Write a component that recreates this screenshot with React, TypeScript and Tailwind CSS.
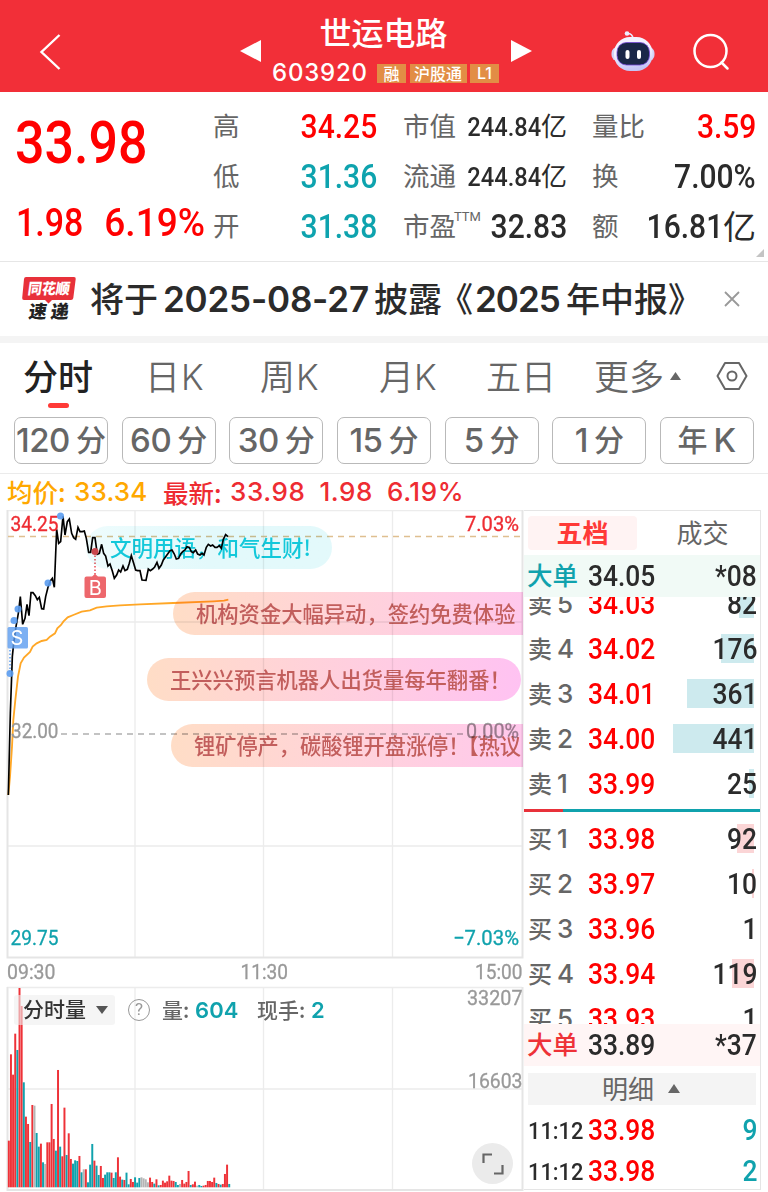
import clsx from 'clsx'

const UP = '#ee3238'
const DOWN = '#10a2ad'
const FLAT = '#b5b5b5'

const quoteColumns = [
  {
    className: 'w-[164px]',
    rows: [
      { label: '高', value: '34.25', color: 'text-[#ff0000]' },
      { label: '低', value: '31.36', color: 'text-[#0ea3ae]' },
      { label: '开', value: '31.38', color: 'text-[#0ea3ae]' },
    ],
  },
  {
    className: 'ml-[26px] w-[164px]',
    rows: [
      { label: '市值', value: '244.84', unit: '亿', small: true },
      { label: '流通', value: '244.84', unit: '亿', small: true },
      { label: '市盈', value: '32.83', ttm: true },
    ],
  },
  {
    className: 'ml-[25px] w-[164px]',
    rows: [
      { label: '量比', value: '3.59', color: 'text-[#ff0000]' },
      { label: '换', value: '7.00%' },
      { label: '额', value: '16.81', unit: '亿' },
    ],
  },
]

const periods = [
  ['120', '分'],
  ['60', '分'],
  ['30', '分'],
  ['15', '分'],
  ['5', '分'],
  ['1', '分'],
  ['年', 'K'],
]

const asks = [
  { label: '卖', level: 5, price: '34.03', volume: 82, depth: 15 },
  { label: '卖', level: 4, price: '34.02', volume: 176, depth: 33 },
  { label: '卖', level: 3, price: '34.01', volume: 361, depth: 67 },
  { label: '卖', level: 2, price: '34.00', volume: 441, depth: 81 },
  { label: '卖', level: 1, price: '33.99', volume: 25, depth: 5 },
]

const bids = [
  { label: '买', level: 1, price: '33.98', volume: 92, depth: 17 },
  { label: '买', level: 2, price: '33.97', volume: 10, depth: 2 },
  { label: '买', level: 3, price: '33.96', volume: 1, depth: 0 },
  { label: '买', level: 4, price: '33.94', volume: 119, depth: 22 },
  { label: '买', level: 5, price: '33.93', volume: 1, depth: 0 },
]

// Chart series are kept in thirds of a pixel
const pricePoints =
  '25,885 31,640 37,470 41,430 48,380 55,340 61,290 68,373 75,355 81,313 87,347 93,278 99,278 106,287 112,299 118,292 125,326 131,327 137,290 144,262 151,243 157,235 163,262 170,88 176,130 182,125 189,48 195,105 202,65 208,57 215,100 221,113 227,118 234,82 240,95 247,95 253,93 259,115 266,157 272,157 278,113 285,113 292,163 298,160 305,133 311,160 317,168 324,198 330,192 337,213 343,235 350,225 356,210 362,216 369,198 375,212 382,208 388,190 394,167 401,190 407,210 413,212 420,212 426,240 438,241 445,207 451,212 458,207 464,201 471,187 477,205 484,195 490,180 497,170 503,162 510,152 516,150 523,162 529,177 536,175 542,162 548,155 555,150 561,140 568,142 574,155 580,158 587,150 593,162 600,165 606,160 612,165 619,142 625,133 632,138 638,135 645,142 651,142 658,137 664,145 670,118 677,104 684,110'
const averagePoints =
  '25,885 30,830 36,740 40,660 46,600 54,530 62,490 72,473 90,456 98,440 110,430 125,423 140,420 150,410 165,400 172,385 183,375 190,365 203,352 220,345 245,335 270,331 290,323 320,319 360,316 420,313 520,309 640,304 672,302 685,299'

const volumes =
  'r140 r399 r338 r461 t412 r598 r544 t315 r212 r190 t136 r247 g245 t163 t122 r131 t75 g70 r135 r135 r250 r145 t110 r352 t122 r93 r239 t97 r162 r85 t71 t81 t79 r94 t45 g54 r54 t15 t68 t130 r80 t65 t37 r64 r28 t38 t45 t45 r44 t28 t45 r90 r32 t23 r22 t44 t9 r25 r16 t30 t14 t28 g30 g27 g24 g15 r29 r16 t11 r24 t6 r7 r20 r14 r18 r35 r20 r19 t16 t7 g10 r22 r11 r16 r49 t7 r9 r17 g5 t7 t4 r5 r7 r19 r19 r16 r29 t13 r10 t8 r10 r40 r68 t10'
    .split(' ')
    .map((item) => ({
      color: item[0] === 'r' ? UP : item[0] === 't' ? DOWN : FLAT,
      height: Number(item.slice(1)),
    }))

function Num({
  className,
  children,
}: {
  className?: string
  children: React.ReactNode
}) {
  return (
    <span
      className={clsx(
        "inline-block font-['Roboto'] font-medium whitespace-pre",
        className,
      )}
    >
      {children}
    </span>
  )
}

function Header() {
  return (
    <header className="flex h-[92px] bg-[#f22f38] text-white">
      <div className="flex w-[240px] items-center pt-3 pl-[38px]">
        <svg width="24" height="38" fill="none" stroke="currentColor">
          <path d="M21.5 2 3.5 19l18 17" strokeWidth="2.4" />
        </svg>
      </div>
      <svg
        width="22"
        height="24"
        className="mt-[39px] shrink-0"
        fill="currentColor"
      >
        <path d="M0 12 21 1v22z" />
      </svg>
      <div className="flex w-[249px] shrink-0 flex-col items-center">
        <div className="mt-[14px] -ml-[6px] h-[35px] text-[32px] leading-[35px] font-medium">
          世运电路
        </div>
        <div className="mt-[12px] flex w-full items-center pl-[10px]">
          <div className="w-[105px] font-['Inter'] text-[24px] leading-6 font-medium tracking-[0.8px]">
            603920
          </div>
          <div className="flex gap-[3.5px] text-[16px] leading-[18px] font-medium">
            <div className="h-[19px] w-[29px] bg-[#e28d45] text-center">融</div>
            <div className="h-[19px] w-[57px] bg-[#e28d45] text-center">
              沪股通
            </div>
            <div className="h-[19px] w-[29px] bg-[#e28d45] text-center font-['Inter']">
              L1
            </div>
          </div>
        </div>
      </div>
      <svg
        width="22"
        height="24"
        className="mt-[39px] shrink-0"
        fill="currentColor"
      >
        <path d="M21 12 0 1v22z" />
      </svg>
      <svg width="46" height="44" className="mt-[29px] ml-[77px] shrink-0">
        <defs>
          <linearGradient id="head" x1="0" y1="0" x2="0.2" y2="1">
            <stop offset="0.5" stopColor="#f4f2ff" />
            <stop offset="1" stopColor="#c3c5f6" />
          </linearGradient>
        </defs>
        <path
          d="M17.5 4.5q5 0 5.5 5"
          fill="none"
          stroke="#e9e9ff"
          strokeWidth="1.6"
        />
        <circle cx="17" cy="4.5" r="2.3" fill="#eeeeff" />
        <rect x="1.5" y="18" width="43" height="14" rx="6" fill="#d3d3f6" />
        <rect x="4" y="8" width="38.5" height="34" rx="16" fill="url(#head)" />
        <rect
          x="7"
          y="13.5"
          width="32.5"
          height="22.5"
          rx="9.5"
          fill="#1a2748"
          stroke="#7548d8"
          strokeWidth="0.8"
        />
        <rect x="15.5" y="21" width="4" height="9" rx="2" fill="#fff" />
        <rect x="27" y="21" width="4" height="9" rx="2" fill="#fff" />
      </svg>
      <svg
        width="40"
        height="40"
        className="mt-8 ml-[36px] shrink-0"
        fill="none"
        stroke="currentColor"
        strokeWidth="2.5"
      >
        <circle cx="18.5" cy="19" r="16" />
        <path d="m29.5 30.5 6 6" strokeLinecap="round" />
      </svg>
    </header>
  )
}

function Quote() {
  return (
    <section className="relative flex h-[170px] border-b border-[#e6e6e6]">
      <div className="w-[213px] pl-[15px] text-[#ff0000]">
        <Num className="mt-[21px] origin-left scale-x-[0.88] text-[59px] leading-[60px]">
          33.98
        </Num>
        <div className="mt-[30px] flex h-10 w-[190px] justify-between pl-px leading-10">
          <Num className="origin-left scale-x-[0.87] text-[39px]">1.98</Num>
          <Num className="origin-right scale-x-[0.95] text-[39px]">6.19%</Num>
        </div>
      </div>
      {quoteColumns.map((column, i) => (
        <div key={i} className={clsx('pt-[10px]', column.className)}>
          {column.rows.map((row) => (
            <div
              key={row.label}
              className="flex h-[50px] items-center justify-between"
            >
              <div className="-mt-1 flex text-[26.5px] text-[#666]">
                {row.label}
                {'ttm' in row && (
                  <span className="mt-0.5 -mr-3 -ml-[2px] font-['Roboto'] text-[13px] leading-5">
                    TTM
                  </span>
                )}
              </div>
              <div
                className={clsx(
                  'flex items-center',
                  'color' in row ? row.color : 'text-[#2b2b2b]',
                  'small' in row ? 'text-[26px]' : 'text-[33px]',
                )}
              >
                <Num className="origin-right scale-x-[0.91]">{row.value}</Num>
                {'unit' in row && (
                  <span className="-mt-1 leading-none">{row.unit}</span>
                )}
              </div>
            </div>
          ))}
        </div>
      ))}
      <svg width="8" height="8" className="absolute right-1 bottom-1">
        <path d="M8 0v8H0z" fill="#c4c4c4" />
      </svg>
    </section>
  )
}

function Notice() {
  return (
    <section className="flex h-[81px] items-center border-b-[7px] border-[#f4f4f4] pl-[22px] text-[#2b2b2b]">
      <svg
        width="54"
        height="48"
        className="shrink-0 font-['Noto_Sans_CJK_SC'] font-black"
      >
        <path
          d="M4 2h48q2 0 1.700 2l-2.400 19q-.3 2-2.300 2H30l-3.500 3.500L23 25H2q-2 0-1.800-2L2 4q.2-2 2-2z"
          fill="#e8313a"
        />
        <g transform="skewX(-8)">
          <text
            x="8"
            y="19"
            fontSize="15"
            textLength="42"
            lengthAdjust="spacingAndGlyphs"
            fill="#fff"
          >
            同花顺
          </text>
          <text x="12" y="43.5" fontSize="18" textLength="40" fill="#222">
            速递
          </text>
        </g>
      </svg>
      <div className="ml-[14px] flex w-[614px] shrink-0 items-baseline text-[34px] font-medium whitespace-nowrap">
        <span className="w-[73px] shrink-0">将于</span>
        <span className="w-[211px] shrink-0 font-['Inter'] text-[35px] font-semibold tracking-[-0.2px]">
          2025-08-27
        </span>
        <span className="w-[65px] shrink-0">披露</span>
        <span className="w-[36px] shrink-0">《</span>
        <span className="w-[91px] shrink-0 font-['Inter'] text-[35px] font-semibold tracking-[-1px]">
          2025
        </span>
        <span className="shrink-0">年中报》</span>
      </div>
      <svg
        width="16"
        height="16"
        className="ml-[20px] shrink-0"
        stroke="#999"
        strokeWidth="1.8"
      >
        <path d="m1 1 14 14M15 1 1 15" />
      </svg>
    </section>
  )
}

function Tabs() {
  return (
    <nav className="flex h-[67px] text-[35px] leading-[64px] whitespace-nowrap text-[#666]">
      <div className="flex w-[124px] flex-col pl-[23px] font-medium text-[#222]">
        <div className="h-[60px]">分时</div>
        <div className="ml-[25px] h-[5px] w-[21px] rounded-full bg-[#ff3a37]" />
      </div>
      <div className="ml-5 w-[113px] pl-px font-[350]">
        日<span className="ml-px font-['Inter']">K</span>
      </div>
      <div className="w-[120px] pl-[3px] font-[350]">
        周<span className="ml-px font-['Inter']">K</span>
      </div>
      <div className="w-[109px] pl-[2px] font-[350]">
        月<span className="font-['Inter']">K</span>
      </div>
      <div className="w-[108px] font-[350]">五日</div>
      <div className="flex w-[122px] font-[350]">
        更多
        <svg width="11" height="8" className="mt-[29px] ml-[6px]" fill="#666">
          <path d="M5.5 0 11 8H0z" />
        </svg>
      </div>
      <svg
        width="32"
        height="30"
        className="mt-[18px] shrink-0"
        fill="none"
        stroke="#666"
        strokeWidth="2"
      >
        <path d="M9 2h14l7.5 13L23 28H9L1.5 15z" strokeLinejoin="round" />
        <circle cx="16" cy="15" r="4.5" />
      </svg>
    </nav>
  )
}

function Periods() {
  return (
    <div className="flex h-[64px] items-start justify-between border-b border-[#ebebeb] pt-[7px] pr-[14px] pl-[14px]">
      {periods.map(([first, second]) => (
        <button
          key={first}
          className="flex h-[47px] w-[94px] items-center justify-center gap-[6px] rounded-[7px] border border-[#b9b9b9] font-['Inter','Noto_Sans_CJK_SC',sans-serif] text-[30px] font-medium whitespace-nowrap text-[#666]"
        >
          <span className={first === '年' ? '' : 'text-[33px] tracking-[-0.5px]'}>
            {first}
          </span>
          <span className={second === 'K' ? 'text-[33px]' : ''}>{second}</span>
        </button>
      ))}
    </div>
  )
}

function Label({
  x,
  y,
  width,
  fill = '#999',
  children,
}: {
  x: number
  y: number
  width: number
  fill?: string
  children: string
}) {
  return (
    <text
      x={x}
      y={y}
      fill={fill}
      fontSize="21"
      textLength={width}
      lengthAdjust="spacingAndGlyphs"
      className="font-['Roboto']"
      stroke={fill}
      strokeWidth="0.3"
    >
      {children}
    </text>
  )
}

function Chart() {
  return (
    <div className="relative isolate h-[682px] w-[524px] shrink-0 overflow-hidden bg-white">
      <svg width="524" height="682" viewBox="0 510 524 682">
        <g stroke="#ececec" strokeWidth="1.3" fill="none">
          <path d="M7 510.7H522M7 622H522M7 846H522M7 987.5H522M7 1089H522" />
          <path d="M135 511V957M263.5 511V957M392.5 511V957" />
          <path d="M135 988V1189M263.5 988V1189M392.5 988V1189" />
          <path
            d="M7.5 510V957.5H522.5V510M7.5 987V1190H522.5V987"
            stroke="#e5e5e5"
            strokeWidth="2"
          />
        </g>
        <path
          d="M8 536.5H522"
          stroke="#dfbf90"
          strokeWidth="1.3"
          strokeDasharray="6 5"
        />
        <path
          d="M61 734H465"
          stroke="#b0b0b0"
          strokeWidth="1.5"
          strokeDasharray="6 5"
        />
        <g transform="translate(0 500) scale(0.3333)" fill="none">
          <polyline points={averagePoints} stroke="#ffa726" strokeWidth="5.5" />
          <polyline points={pricePoints} stroke="#000" strokeWidth="5" />
        </g>
        <Label x={10.5} y={530.5} width={48} fill="#ee2c32">
          34.25
        </Label>
        <Label x={465} y={530.5} width={54} fill="#ee2c32">
          7.03%
        </Label>
        <Label x={11} y={737.5} width={47.5}>
          32.00
        </Label>
        <Label x={466} y={737.5} width={53}>
          0.00%
        </Label>
        <Label x={10.5} y={945} width={48} fill={DOWN}>
          29.75
        </Label>
        <Label x={453} y={945} width={66} fill={DOWN}>
          −7.03%
        </Label>
        <Label x={7} y={979} width={48.5}>
          09:30
        </Label>
        <Label x={240.5} y={979} width={47.5}>
          11:30
        </Label>
        <Label x={475} y={979} width={47.5}>
          15:00
        </Label>
        <Label x={467} y={1005} width={55.5}>
          33207
        </Label>
        <Label x={468} y={1087.5} width={54.5}>
          16603
        </Label>
        <g transform="translate(0 920) scale(0.3333)">
          {volumes.map((bar, i) => (
            <rect
              key={i}
              x={23.5 + i * 6.42}
              y={802 - bar.height}
              width="5.9"
              height={bar.height}
              fill={bar.color}
            />
          ))}
        </g>
        <g fill="#5b9cf0" fillOpacity="0.9">
          <circle cx="60.5" cy="516" r="3.5" />
          <circle cx="48" cy="583" r="3.5" />
          <circle cx="18" cy="609" r="3.5" />
          <circle cx="14" cy="620.5" r="3.5" />
          <circle cx="10" cy="673.5" r="3.5" />
        </g>
        <path
          d="M10 650V672"
          stroke="#5b9cf0"
          strokeWidth="1.5"
          strokeDasharray="1.5 2"
        />
        <rect
          x="7.5"
          y="627"
          width="20.5"
          height="21.5"
          rx="1.5"
          fill="#5b9cf0"
          fillOpacity="0.8"
        />
        <path
          d="M95 552V575"
          stroke="#ea4c52"
          strokeWidth="1.5"
          strokeDasharray="1.5 2"
        />
        <circle cx="95" cy="551.5" r="3.5" fill="#d9484d" />
        <path
          d="M86 576.5h6l3-2.5 3 2.5h6q2 0 2 2V596q0 2-2 2H86.5q-2 0-2-2V578.5q0-2 2-2z"
          fill="#ea4c52"
          fillOpacity="0.85"
        />
        <g
          fill="#fff"
          fontSize="20"
          textAnchor="middle"
          className="font-['Inter']"
        >
          <text x="17" y="645">
            S
          </text>
          <text x="95.2" y="595">
            B
          </text>
        </g>
      </svg>

      <div className="absolute top-[16px] left-[86px] h-[43px] w-[246px] rounded-full bg-linear-to-r from-[#eefcfd] via-[#e3f9fb] to-[#e3f9fb] pl-[24px] text-[21.5px] leading-[42px] font-medium whitespace-nowrap text-[#13c8da] mix-blend-multiply">
        文明用语，和气生财!
      </div>
      <div className="absolute top-[82px] left-[173px] h-[43px] w-[350px] overflow-hidden rounded-l-full bg-linear-to-r from-[#ffddc6] to-[#ffc8ec] pl-[23px] text-[21.3px] leading-[42px] font-medium whitespace-nowrap text-[#c25e5c] mix-blend-multiply">
        机构资金大幅异动，签约免费体验
      </div>
      <div className="absolute top-[148px] left-[147px] h-[43px] w-[374px] rounded-full bg-linear-to-r from-[#ffddc6] to-[#ffc2f2] pl-[23px] text-[21.3px] leading-[42px] font-medium whitespace-nowrap text-[#c25e5c] mix-blend-multiply">
        王兴兴预言机器人出货量每年翻番！
      </div>
      <div className="absolute top-[214px] left-[171px] h-[43px] w-[352px] overflow-hidden rounded-l-full bg-linear-to-r from-[#ffddc6] to-[#ffc8ec] pl-[23px] text-[21.2px] leading-[42px] font-medium whitespace-nowrap text-[#c25e5c] mix-blend-multiply">
        锂矿停产，碳酸锂开盘涨停！
        <span className="-ml-[12px]">【热议</span>
      </div>

      <div className="absolute top-[484px] left-[14px] flex items-center text-[21px] leading-[32px] font-medium text-[#666]">
        <div className="flex w-[101px] items-center rounded-[3px] bg-[#eee]/60 pl-[9px] text-[#333]">
          <span className="-mt-0.5 mb-0.5 leading-[30px]">分时量</span>
          <svg width="12" height="8" className="ml-[10px]" fill="#555">
            <path d="M0 0h12L6 8z" />
          </svg>
        </div>
        <div className="ml-[13px] size-[22px] rounded-full border-[1.5px] border-[#999] text-center font-['Roboto'] text-[17px] leading-[19px] font-normal text-[#999]">
          ?
        </div>
        <div className="-mt-0.5 ml-[12px] w-[33px] leading-[30px] whitespace-nowrap">
          量:
        </div>
        <div className="w-[62px] font-['Inter'] text-[22px] font-semibold tracking-[0.1px] text-[#10a2ad]">
          604
        </div>
        <div className="-mt-0.5 w-[54px] leading-[30px] whitespace-nowrap">
          现手:
        </div>
        <div className="font-['Inter'] text-[22px] font-semibold text-[#10a2ad]">
          2
        </div>
      </div>

      <button className="absolute top-[633px] left-[472px] flex size-[41px] items-center justify-center rounded-full bg-[#ebebeb]">
        <svg
          width="24"
          height="24"
          fill="none"
          stroke="#666"
          strokeWidth="2.2"
        >
          <path d="M2.5 11V2.5H11M21.5 13v8.5H13" />
        </svg>
      </button>
    </div>
  )
}

function BookRow({ row, bid }: { row: (typeof asks)[number]; bid?: boolean }) {
  return (
    <div className="relative flex h-[45px] shrink-0 items-center pl-1">
      <div className="-mt-0.5 flex w-[60px] items-center text-[24px] font-medium text-[#666]">
        {row.label}
        <span className="mt-0.5 ml-[5px] font-['Inter'] text-[26px]">
          {row.level}
        </span>
      </div>
      <Num className="mt-0.5 origin-left scale-x-[0.91] text-[29px] text-[#ff0000]">
        {row.price}
      </Num>
      <div
        className={clsx(
          'absolute top-2 right-[6px] h-[29px]',
          bid ? 'bg-[#fbd5d6]' : 'bg-[#cdeaee]',
        )}
        style={{ width: row.depth }}
      />
      <Num className="relative mt-0.5 mr-[3px] ml-auto origin-right scale-x-[0.91] text-[29px] text-[#2b2b2b]">
        {row.volume}
      </Num>
    </div>
  )
}

function BigOrder({
  price,
  volume,
  className,
}: {
  price: string
  volume: string
  className: string
}) {
  return (
    <div
      className={clsx(
        'flex h-[42px] shrink-0 items-center pl-[3px] text-[25.5px] font-medium',
        className,
      )}
    >
      <div className="-mt-1 w-[61px]">大单</div>
      <Num className="mt-px origin-left scale-x-[0.91] text-[29px] text-[#2b2b2b]">
        {price}
      </Num>
      <Num className="mt-px mr-[3px] ml-auto origin-right scale-x-[0.91] text-[29px] text-[#2b2b2b]">
        {volume}
      </Num>
    </div>
  )
}

function OrderBook() {
  return (
    <aside className="flex h-[680px] w-[237px] flex-col border-t border-r border-b border-[#e5e5e5]">
      <div className="flex h-[44px] shrink-0 items-center pl-1 text-[26px]">
        <div className="flex h-[34px] w-[109px] items-center justify-center rounded-[4px] bg-[#fff3f3] pb-[3px] font-bold text-[#ff3a37]">
          五档
        </div>
        <div className="flex-1 pb-[3px] pl-2 text-center text-[#666]">成交</div>
      </div>
      <BigOrder
        price="34.05"
        volume="*08"
        className="bg-[#f1faf6] text-[#10a2ad]"
      />
      <div className="flex h-[427px] shrink-0 flex-col overflow-hidden">
        <div className="-mt-4">
          {asks.map((row) => (
            <BookRow key={row.level} row={row} />
          ))}
        </div>
        <div className="mt-[3px] mb-[4px] flex h-[3px] shrink-0">
          <div className="w-[39px] bg-[#e8313a]" />
          <div className="flex-1 bg-[#10a2ad]" />
        </div>
        {bids.map((row) => (
          <BookRow key={row.level} row={row} bid />
        ))}
      </div>
      <BigOrder
        price="33.89"
        volume="*37"
        className="bg-[#fff5f5] text-[#ee3238]"
      />
      <div className="mt-[7px] mr-1 mb-[4px] ml-1 flex h-[32px] shrink-0 items-center justify-center gap-[14px] bg-[#f4f4f4] pr-0.5 text-[26px] text-[#666]">
        <span className="-mt-[3px]">明细</span>
        <svg width="12" height="9" className="-mt-px" fill="#666">
          <path d="M6 0l6 9H0z" />
        </svg>
      </div>
      {['9', '2'].map((volume) => (
        <div key={volume} className="flex h-[41px] items-center pt-0.5 pl-1">
          <div className="w-[60px]">
            <Num className="origin-left scale-x-[0.91] text-[24px] text-[#2b2b2b]">
              11:12
            </Num>
          </div>
          <Num className="origin-left scale-x-[0.91] text-[29px] text-[#ff0000]">
            33.98
          </Num>
          <Num className="mr-[3px] ml-auto origin-right scale-x-[0.91] text-[29px] text-[#10a2ad]">
            {volume}
          </Num>
        </div>
      ))}
    </aside>
  )
}

export default function App() {
  return (
    <div className="h-[1192px] w-[768px] overflow-hidden bg-white font-['Noto_Sans_CJK_SC',sans-serif]">
      <Header />
      <Quote />
      <Notice />
      <Tabs />
      <Periods />
      <div className="flex h-[36px] items-center pl-[7px] text-[25.5px] leading-[34px] font-medium whitespace-nowrap text-[#ee2c32]">
        <div className="flex w-[156px] text-[#ffa800]">
          <span className="-mt-px w-[67px]">均价:</span>
          <span className="font-['Inter'] text-[26px] tracking-[0.2px]">
            33.34
          </span>
        </div>
        <span className="-mt-px w-[67px]">最新:</span>
        <div className="flex gap-[14px] font-['Inter'] text-[26px] tracking-[0.6px]">
          <span>33.98</span>
          <span>1.98</span>
          <span>6.19%</span>
        </div>
      </div>
      <div className="flex">
        <Chart />
        <OrderBook />
      </div>
    </div>
  )
}
